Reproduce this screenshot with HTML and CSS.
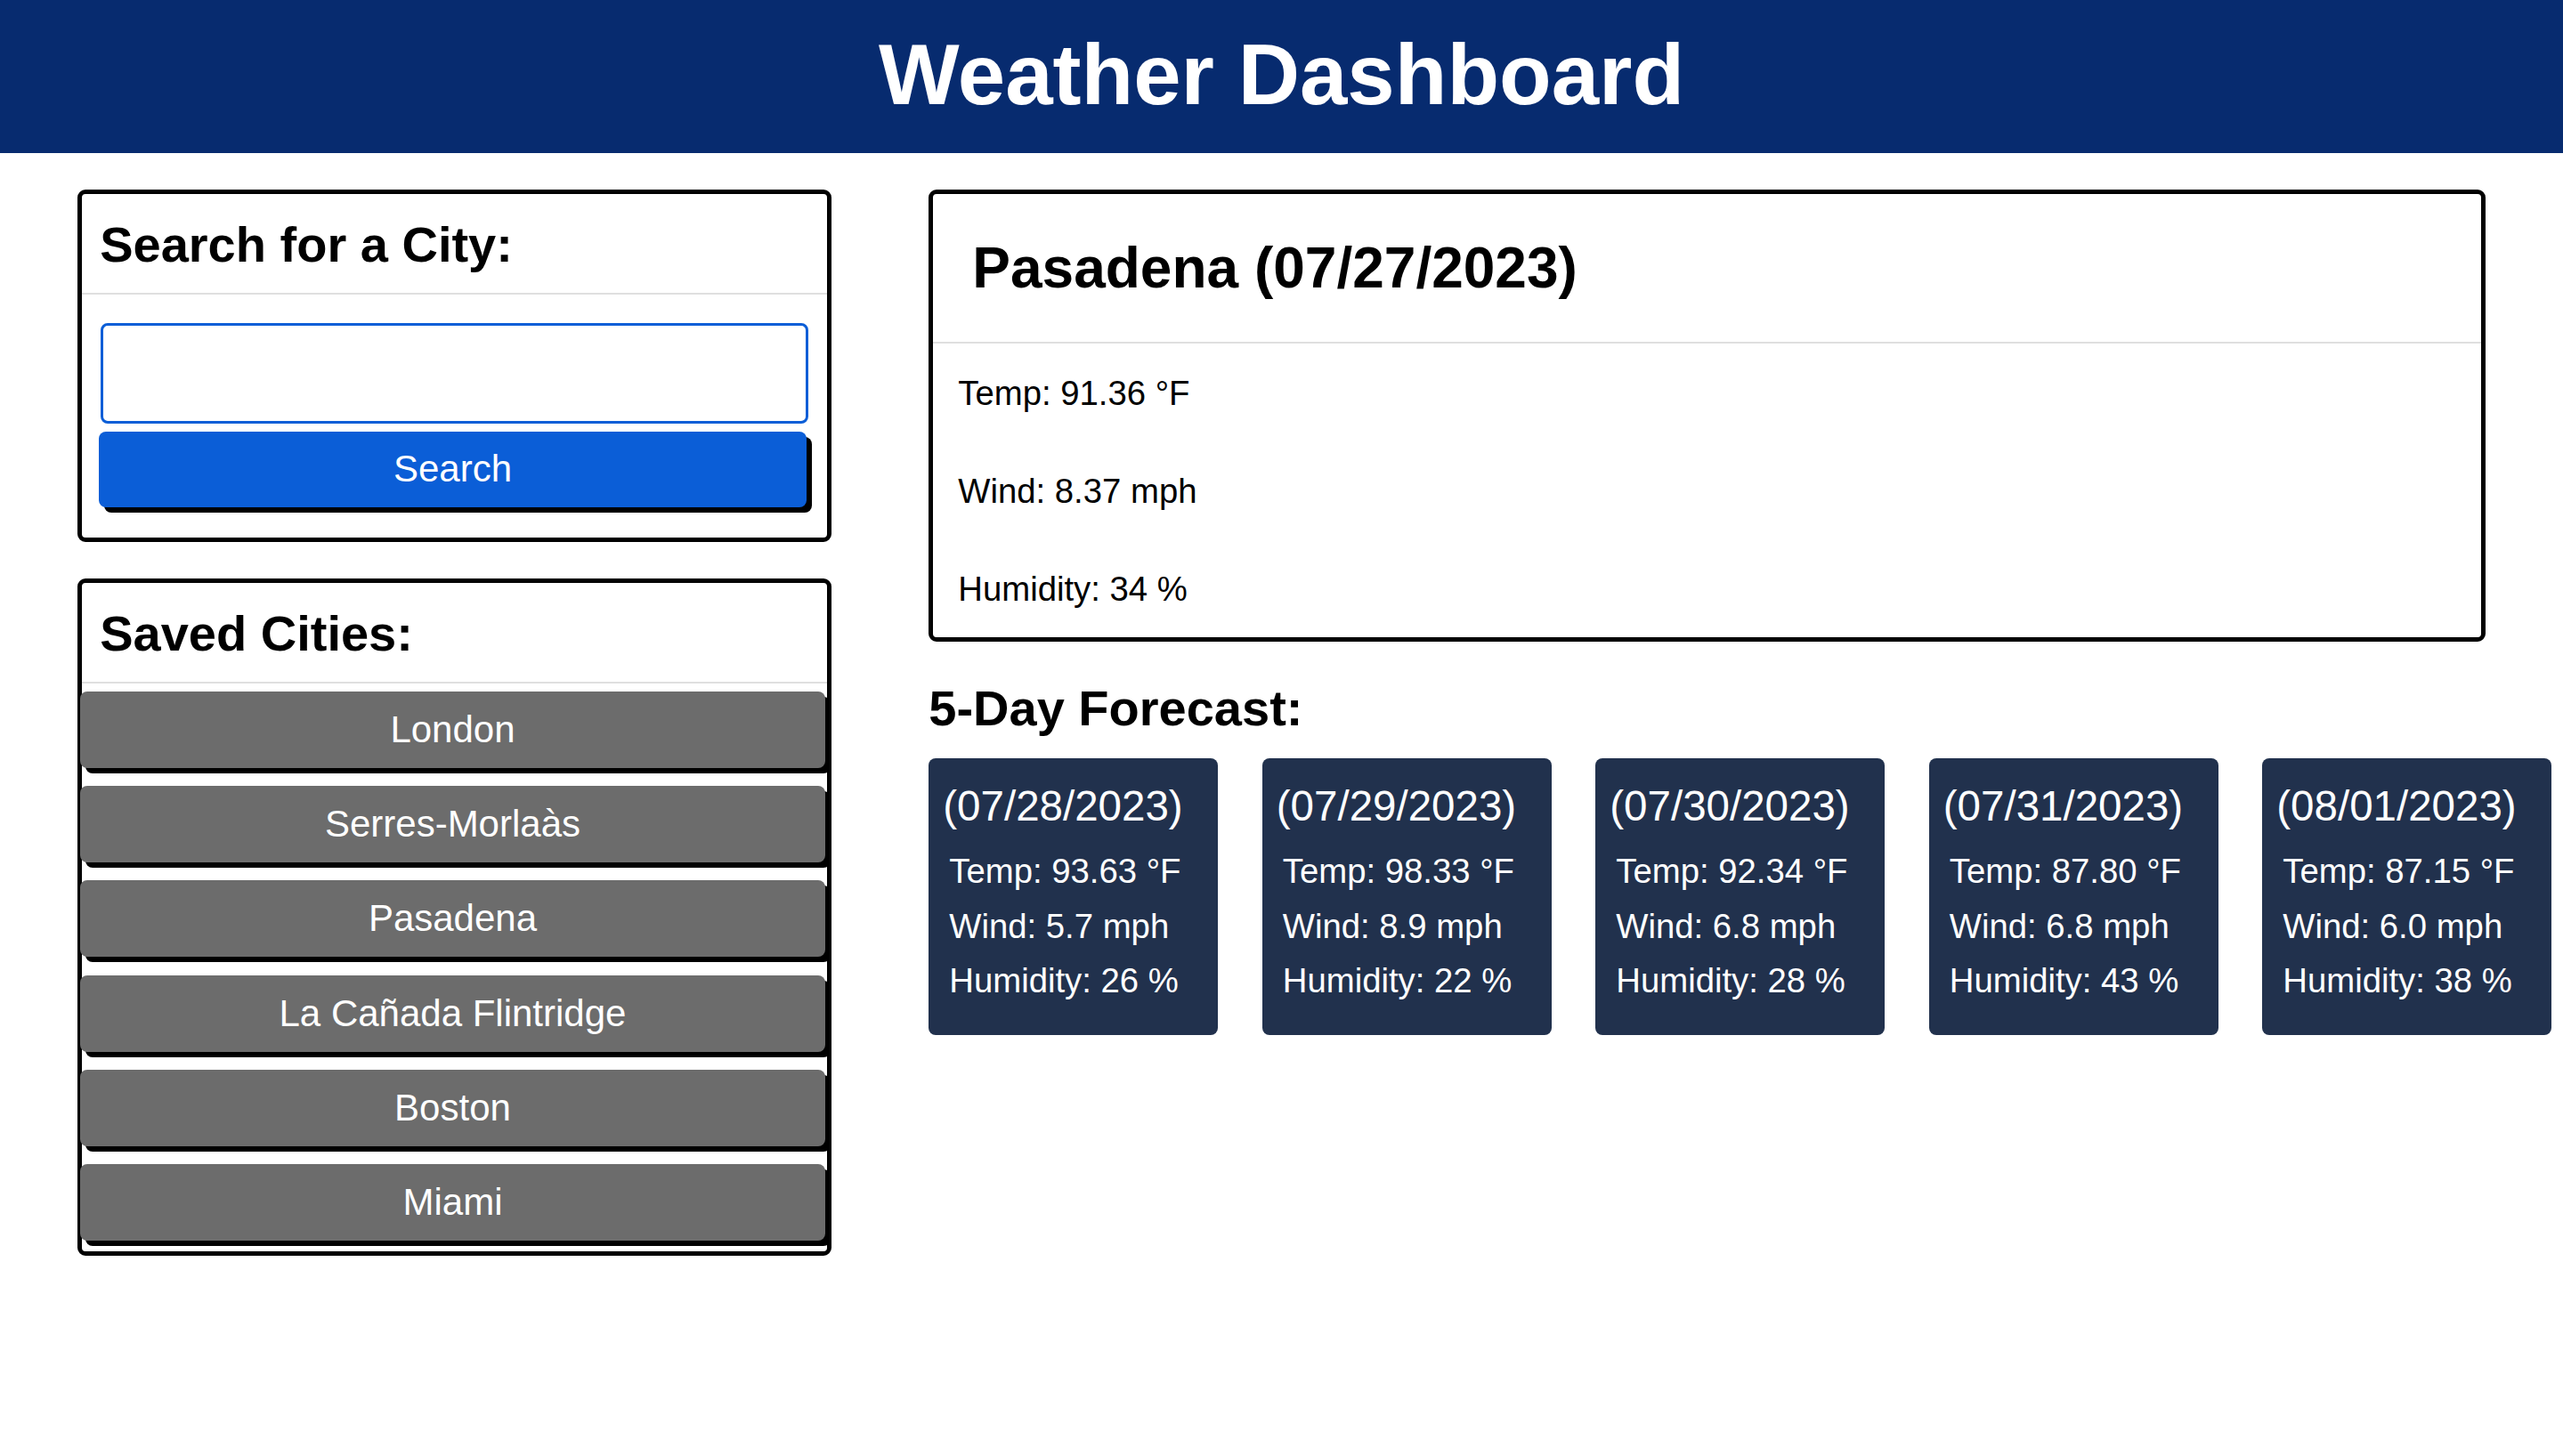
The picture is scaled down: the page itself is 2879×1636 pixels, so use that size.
FILE: index.html
```html
<!DOCTYPE html>
<html lang="en">
<head>
<meta charset="utf-8">
<title>Weather Dashboard</title>
<link rel="stylesheet" href="styles.css">
</head>
<body>
<header class="site-header">
  <h1 class="site-title">Weather Dashboard</h1>
</header>
<main class="layout">
  <aside class="sidebar">
    <section class="panel">
      <div class="panel-header"><h2 class="panel-title">Search for a City:</h2></div>
      <div class="search-body">
        <input class="city-input" type="text" aria-label="City">
        <button class="btn btn-search" type="button">Search</button>
      </div>
    </section>
    <section class="panel">
      <div class="panel-header"><h2 class="panel-title">Saved Cities:</h2></div>
      <div class="saved-list">
        <button class="btn btn-city" type="button">London</button>
        <button class="btn btn-city" type="button">Serres-Morlaàs</button>
        <button class="btn btn-city" type="button">Pasadena</button>
        <button class="btn btn-city" type="button">La Cañada Flintridge</button>
        <button class="btn btn-city" type="button">Boston</button>
        <button class="btn btn-city" type="button">Miami</button>
      </div>
    </section>
  </aside>
  <section class="content">
    <div class="current-card">
      <div class="current-header"><h2 class="current-title">Pasadena (07/27/2023)</h2></div>
      <div class="current-body">
        <p>Temp: 91.36 °F</p>
        <p>Wind: 8.37 mph</p>
        <p>Humidity: 34 %</p>
      </div>
    </div>
    <h2 class="forecast-title">5-Day Forecast:</h2>
    <div class="forecast-row">
      <div class="forecast-card">
        <h3 class="forecast-date">(07/28/2023)</h3>
        <p>Temp: 93.63 °F</p>
        <p>Wind: 5.7 mph</p>
        <p>Humidity: 26 %</p>
      </div>
      <div class="forecast-card">
        <h3 class="forecast-date">(07/29/2023)</h3>
        <p>Temp: 98.33 °F</p>
        <p>Wind: 8.9 mph</p>
        <p>Humidity: 22 %</p>
      </div>
      <div class="forecast-card">
        <h3 class="forecast-date">(07/30/2023)</h3>
        <p>Temp: 92.34 °F</p>
        <p>Wind: 6.8 mph</p>
        <p>Humidity: 28 %</p>
      </div>
      <div class="forecast-card">
        <h3 class="forecast-date">(07/31/2023)</h3>
        <p>Temp: 87.80 °F</p>
        <p>Wind: 6.8 mph</p>
        <p>Humidity: 43 %</p>
      </div>
      <div class="forecast-card">
        <h3 class="forecast-date">(08/01/2023)</h3>
        <p>Temp: 87.15 °F</p>
        <p>Wind: 6.0 mph</p>
        <p>Humidity: 38 %</p>
      </div>
    </div>
  </section>
</main>
</body>
</html>
```
FILE: styles.css
```css
body {
  margin: 0;
  background: #fff;
  color: #000;
  font-family: "Liberation Sans", Arial, Helvetica, sans-serif;
}

.site-header {
  background: #072b6f;
  height: 172px;
  display: flex;
  align-items: center;
  justify-content: center;
}

.site-title {
  margin: 0;
  padding-bottom: 5px;
  color: #fff;
  font-size: 96px;
  line-height: 110px;
  font-weight: 700;
}

.layout {
  display: flex;
  align-items: flex-start;
  gap: 109px;
  padding: 40.5px 87px 60px 86.7px;
}

.sidebar {
  width: 847.6px;
  flex-shrink: 0;
  display: flex;
  flex-direction: column;
  gap: 41.5px;
}

.panel {
  border: 5px solid #000;
  border-radius: 9px;
}

.panel-header {
  padding: 23px 20.5px 21px;
  border-bottom: 2px solid #dfdfdf;
}

.panel-title {
  margin: 0;
  font-size: 56px;
  line-height: 67px;
  font-weight: 700;
}

.search-body {
  padding: 32px 21.3px 34px;
}

.city-input {
  display: block;
  box-sizing: border-box;
  width: 100%;
  height: 113px;
  margin: 0 0 9px;
  padding: 0 20px;
  border: 3px solid #0b5ed7;
  border-radius: 8px;
  outline: none;
  font-family: inherit;
  font-size: 37px;
}

.btn {
  display: flex;
  align-items: center;
  justify-content: center;
  box-sizing: border-box;
  width: 100%;
  margin: 0 0 0 -2px;
  padding: 0;
  border: none;
  border-radius: 8px;
  color: #fff;
  font-family: inherit;
  font-size: 42px;
  box-shadow: 6px 6px 0 #000;
  cursor: pointer;
}

.btn-search {
  height: 85px;
  background: #0b5ed7;
}

.saved-list {
  display: flex;
  flex-direction: column;
  gap: 20.3px;
  padding: 8.7px 0 11.8px;
}

.btn-city {
  height: 86px;
  background: #6c6c6c;
}

.content {
  flex: 1;
  min-width: 0;
}

.current-card {
  border: 5px solid #000;
  border-radius: 9px;
}

.current-header {
  padding: 45px 44px 44.5px;
  border-bottom: 2px solid #dfdfdf;
}

.current-title {
  margin: 0;
  font-size: 64px;
  line-height: 77px;
  font-weight: 700;
}

.current-body {
  display: flex;
  flex-direction: column;
  gap: 54.5px;
  padding: 28px 28px 26.5px;
}

.current-body p {
  margin: 0;
  font-size: 38.3px;
  line-height: 55.5px;
}

.forecast-title {
  margin: 41px 0 22.5px;
  font-size: 56px;
  line-height: 67.2px;
  font-weight: 700;
}

.forecast-row {
  display: flex;
  gap: 49.5px;
}

.forecast-card {
  flex: 0 0 325px;
  box-sizing: border-box;
  height: 311px;
  padding: 26.5px 0 26px 16px;
  border-radius: 8px;
  background: #21314d;
  color: #fff;
}

.forecast-date {
  margin: 0 0 14px;
  font-size: 47.5px;
  line-height: 56px;
  font-weight: 400;
}

.forecast-card p {
  margin: 0 0 0 7px;
  font-size: 38.3px;
  line-height: 61.3px;
}
```
